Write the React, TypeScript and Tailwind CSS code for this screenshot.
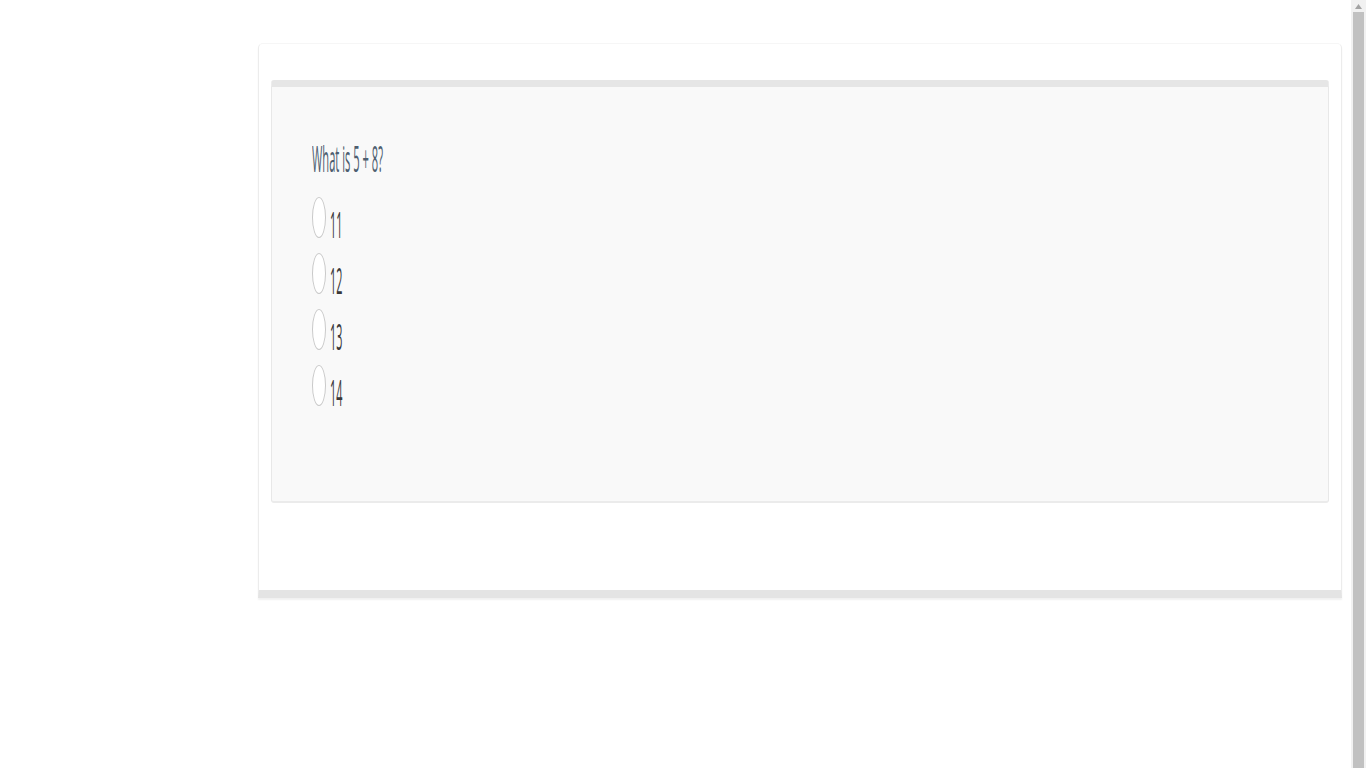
import React from 'react';

const options = ['11', '12', '13', '14'];

const Squash: React.FC<{ children: React.ReactNode; className?: string }> = ({ children, className }) => (
  <span className={`inline-block origin-left whitespace-nowrap leading-none ${className ?? 'scale-x-[0.31]'}`}>
    {children}
  </span>
);

export default function App() {
  return (
    <div className="flex h-screen w-full overflow-hidden bg-white" style={{ fontFamily: '"Open Sans", "Liberation Sans", sans-serif' }}>
      <div className="flex-1 pl-[258px] pr-[9px] pt-[43px]">
        {/* outer card */}
        <div className="h-[555px] rounded-t-[5px] border-x border-t border-[#ececec] border-t-[#f6f6f6] border-b-[8px] border-b-[#e4e4e4] bg-white px-[12px] pt-[36px] shadow-[0_2px_2px_rgba(0,0,0,0.06)]">
          {/* inner card */}
          <div className="h-[423px] rounded-[3px] border-x border-[#e8e8e8] border-t-[7px] border-t-[#e6e6e6] border-b-2 border-b-[#ebebeb] bg-[#f9f9f9] pl-[40px] pt-[45px]">
            <div className="h-[36px] text-[36px] text-[#4d5e70]">
              <Squash>What is 5 + 8?</Squash>
            </div>
            <div className="mt-[29px] flex flex-col gap-[15px]">
              {options.map((o) => (
                <label key={o} className="flex h-[41px] items-end">
                  <span className="h-[41px] w-[14px] shrink-0 rounded-[50%] border border-[#c9c9c9] bg-white" />
                  <span className="mb-[4px] ml-[4px] h-[36px] text-[36px] font-medium text-[#383838]">
                    <Squash className="scale-x-[0.3]">{o}</Squash>
                  </span>
                </label>
              ))}
            </div>
          </div>
        </div>
      </div>
      {/* scrollbar */}
      <div className="flex h-full w-[15px] shrink-0 flex-col items-center bg-[#f1f1f1]">
        <div className="flex h-[12px] w-full items-center justify-center">
          <svg width="7" height="5" viewBox="0 0 7 5">
            <path d="M3.5 0 L7 5 L0 5 Z" fill="#a3a3a3" />
          </svg>
        </div>
        <div className="w-[11px] flex-1 bg-[#c1c1c1]" />
      </div>
    </div>
  );
}
